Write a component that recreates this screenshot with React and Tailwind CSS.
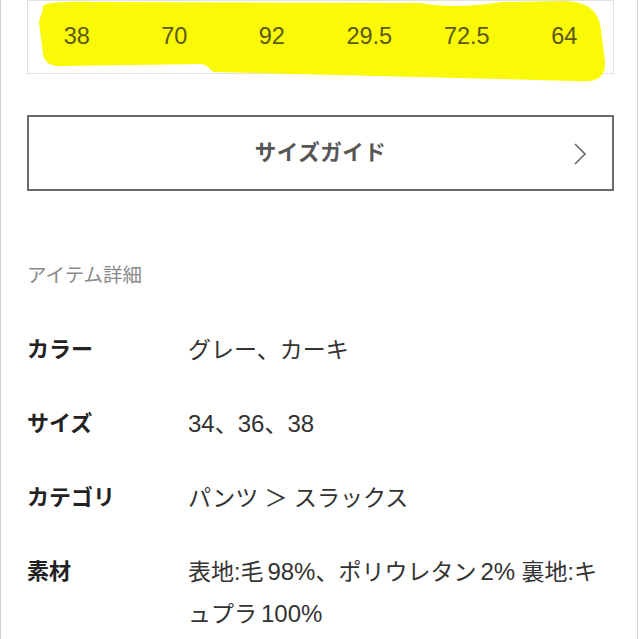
import React from "react";

const font = { fontFamily: '"Liberation Sans", "Noto Sans CJK JP", sans-serif' };

const nums = ["38", "70", "92", "29.5", "72.5", "64"];

const rows = [
  ["カラー", "グレー、カーキ"],
  ["サイズ", "34、36、38"],
  ["カテゴリ", "パンツ ＞ スラックス"],
  ["素材", "表地:毛98%、ポリウレタン2% 裏地:キュプラ100%"],
];

function Rich({ text }) {
  const parts = text.split(/(\d+(?:\.\d+)?%?)/);
  return parts.map((p, i) => {
    if (/^\d/.test(p)) {
      const prev = parts[i - 1] || "";
      const last = prev.slice(-1);
      const gap = last && !/[、\s:]/.test(last);
      return (
        <span key={i} className={gap ? "text-[24px] ml-[4px]" : "text-[24px]"}>
          {p}
        </span>
      );
    }
    return <span key={i}>{p}</span>;
  });
}

export default function App() {
  return (
    <div
      className="w-[638px] h-[639px] overflow-hidden bg-white border-x border-[#d4d4d4] pl-[26px] pr-[23px]"
      style={font}
    >
      {/* size table row */}
      <div className="relative h-[74px] border-x border-b border-t border-[#e2e2e2]">
        <svg
          className="absolute left-[-27px] top-[-1px]"
          width="639"
          height="90"
          viewBox="0 0 639 90"
        >
          <path
            d="M42 8 C40 2 60 1 100 2 L420 3 C440 7 470 7 500 2 L560 1 C586 1 598 10 600 30 L604 62 C605 77 596 83 575 81 L212 72 C208 68 206 65 200 64 L62 66 C49 67 44 62 42 55 L38 22 Z"
            fill="#fafa08"
          />
        </svg>
        <div className="relative grid grid-cols-6 h-full items-center">
          {nums.map((n) => (
            <div key={n} className="text-center text-[23.5px] text-[#5b5810] pb-[1px]">
              {n}
            </div>
          ))}
        </div>
      </div>

      {/* size guide button */}
      <div className="mt-[41px] h-[76px] border-2 border-[#6a6a6a] relative flex items-center justify-center">
        <span className="text-[21.5px] font-bold text-[#555] tracking-[0.5px]">サイズガイド</span>
        <svg
          className="absolute right-[25px] top-[26px]"
          width="14"
          height="22"
          viewBox="0 0 14 22"
          fill="none"
          stroke="#6a6a6a"
          strokeWidth="1.6"
        >
          <path d="M2 1 L12 11 L2 21" />
        </svg>
      </div>

      {/* heading */}
      <div className="mt-[69px] leading-[30px] text-[19.5px] text-[#8a8a8a]">アイテム詳細</div>

      {/* details */}
      <div className="mt-[39px] flex flex-col gap-[32px]">
        {rows.map(([k, v]) => (
          <div key={k} className="flex leading-[42px]">
            <div className="w-[161px] shrink-0 font-bold text-[22px] text-[#222]">{k}</div>
            <div className="flex-1 text-[23px] text-[#333]">
              <Rich text={v} />
            </div>
          </div>
        ))}
      </div>
    </div>
  );
}
